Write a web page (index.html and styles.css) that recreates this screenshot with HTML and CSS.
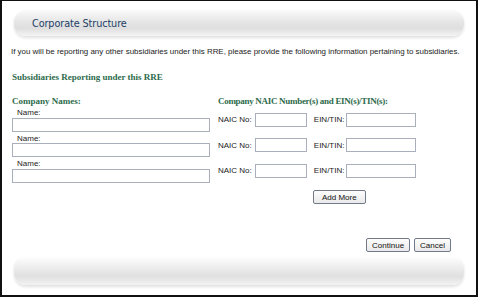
FILE: index.html
```html
<!DOCTYPE html>
<html lang="en">
<head>
    <meta charset="UTF-8">
    <title>Corporate Structure</title>
    <link rel="stylesheet" href="styles.css">
</head>
<body>
    <div class="frame">
        <div class="bar bar-top"><span class="title">Corporate Structure</span></div>

        <p class="intro">If you will be reporting any other subsidiaries under this RRE, please provide the following information pertaining to subsidiaries.</p>

        <h2 class="section-title">Subsidiaries Reporting under this RRE</h2>

        <div class="grid">
            <h3 class="col-title">Company Names:</h3>
            <h3 class="col-title narrow">Company NAIC Number(s) and EIN(s)/TIN(s):</h3>

            <div class="name-cell">
                <label>Name:</label>
                <input type="text" class="name-input">
            </div>
            <div class="num-cell">
                <label>NAIC No:</label><input type="text" class="naic-input">
                <label class="ein-label">EIN/TIN:</label><input type="text" class="ein-input">
            </div>

            <div class="name-cell">
                <label>Name:</label>
                <input type="text" class="name-input">
            </div>
            <div class="num-cell">
                <label>NAIC No:</label><input type="text" class="naic-input">
                <label class="ein-label">EIN/TIN:</label><input type="text" class="ein-input">
            </div>

            <div class="name-cell">
                <label>Name:</label>
                <input type="text" class="name-input">
            </div>
            <div class="num-cell">
                <label>NAIC No:</label><input type="text" class="naic-input">
                <label class="ein-label">EIN/TIN:</label><input type="text" class="ein-input">
            </div>

            <div></div>
            <div class="add-row"><button class="btn">Add More</button></div>
        </div>

        <div class="actions">
            <button class="btn">Continue</button>
            <button class="btn">Cancel</button>
        </div>

        <div class="bar bar-bottom"></div>
    </div>
</body>
</html>
```
FILE: styles.css
```css
body { margin: 0; font-family: "Liberation Sans", Arial, sans-serif; background: #fff; }
.frame { width: 478px; height: 297px; box-sizing: border-box; border: 2px solid #111; border-top-width: 1px; background: #fff; display: flex; flex-direction: column; overflow: hidden; }
.bar { margin: 0 12px; border-radius: 12px; }
.bar-top { margin-top: 9px; height: 26px; display: flex; align-items: center; padding-left: 18px; background: linear-gradient(to bottom, #fafafa 0%, #e6e6e6 45%, #dedede 70%, #f4f4f4 100%); box-shadow: 0 2px 3px rgba(0,0,0,0.12); }
.title { font-family: "DejaVu Sans", Verdana, sans-serif; font-size: 9.7px; color: #1d3f66; letter-spacing: -0.1px; }
.intro { margin: 11px 0 0 9px; font-size: 7.95px; color: #222; }
.section-title { margin: 16px 0 0 10px; font-family: "Liberation Serif", "Times New Roman", serif; font-size: 9px; font-weight: bold; color: #2e6b4c; }
.grid { display: grid; grid-template-columns: 198px 1fr; column-gap: 8px; row-gap: 2px; margin: 14px 0 0 10px; align-items: center; }
.col-title { margin: 0; font-family: "Liberation Serif", "Times New Roman", serif; font-size: 9px; font-weight: bold; color: #2e6b4c; }
.col-title.narrow { letter-spacing: -0.3px; }
.name-cell { display: flex; flex-direction: column; }
.name-cell label { font-size: 8px; color: #222; padding-left: 5px; line-height: 9.5px; }
label { font-size: 8px; color: #222; }
input { font-size: 8px; margin: 0; padding: 0; border: 1px solid #a9b0bb; background: #fff; box-sizing: border-box; height: 14px; }
.name-input { width: 198px; }
.num-cell { display: flex; align-items: center; }
.naic-input { width: 52px; margin-left: 3px; }
.ein-label { margin-left: 7px; }
.ein-input { width: 70px; margin-left: 2px; }
.add-row { padding-left: 95px; padding-top: 1px; }
.btn { font-family: "Liberation Sans", Arial, sans-serif; font-size: 8px; color: #111; background: linear-gradient(to bottom, #fdfdfd, #e9e9e9); border: 1px solid #707a88; border-radius: 2px; padding: 1px 8px; height: 14px; margin: 0; }
.actions { display: flex; justify-content: flex-end; gap: 4px; margin: 34px 25px 0 0; }
.actions .btn { padding: 1px 5px; }
.bar-bottom { margin-top: 4px; height: 29px; background: linear-gradient(to bottom, #ffffff 0%, #ededed 40%, #e0e0e0 70%, #f2f2f2 100%); box-shadow: 0 2px 3px rgba(0,0,0,0.12); }
```
